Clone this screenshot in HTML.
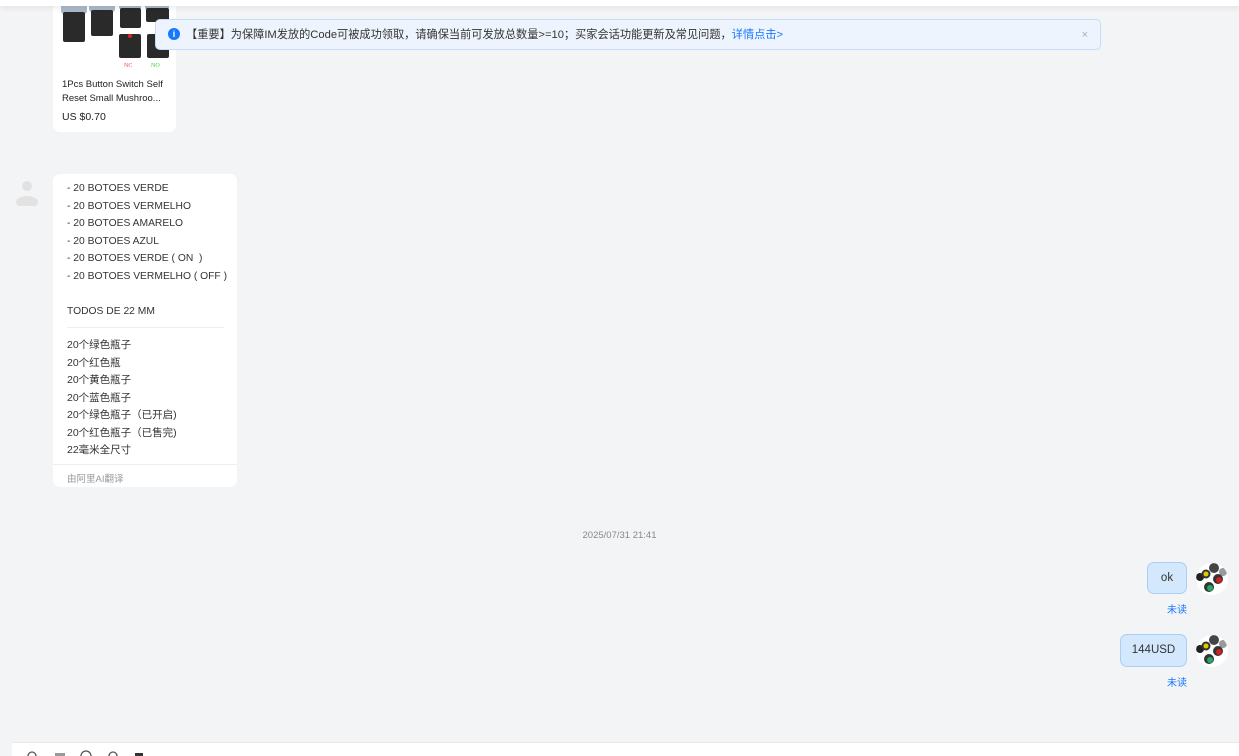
<!DOCTYPE html>
<html><head><meta charset="utf-8"><style>
*{margin:0;padding:0;box-sizing:border-box}
body{width:1239px;height:756px;background:#f3f4f6;position:relative;overflow:hidden;font-family:"Liberation Sans","Noto Sans CJK SC",sans-serif;color:#333}
.abs{position:absolute}
.topbar{left:0;top:0;width:1239px;height:6px;background:#fff;box-shadow:0 2px 6px rgba(0,0,0,.08)}
.card{left:53px;top:0;width:123px;height:132px;background:#fff;border-radius:0 0 7px 7px}
.banner{left:155px;top:19px;width:946px;height:31px;background:#eef4fd;border:1px solid #c6dcf7;border-radius:5px;font-size:11.2px;line-height:30px;padding-left:30px;color:#333}
.bubble{left:53px;top:174px;width:184px;height:313px;background:#fff;border-radius:7px;font-size:10.5px}
.ln{position:absolute;left:14px;white-space:nowrap;color:#333}
.lat{font-size:10.3px}
.me{background:#d3e8fd;border:1px solid #a9cff2;border-radius:7px;font-size:11.5px;text-align:center;line-height:31px;color:#333}
.unread{font-size:10px;color:#1677ff}
.av{width:32px;height:32px;border-radius:50%;background:#fff;overflow:hidden}
</style></head><body>
<div class="abs card">
 <svg width="123" height="75" class="abs" style="left:0;top:0">
  <rect x="8" y="0" width="26" height="14" rx="3" fill="#a9b8c8"/><rect x="10" y="12" width="22" height="30" rx="2" fill="#2a2a2a"/>
  <rect x="36" y="0" width="26" height="12" rx="3" fill="#a9b8c8"/><rect x="38" y="10" width="22" height="26" rx="2" fill="#2a2a2a"/>
  <rect x="66" y="0" width="22" height="10" rx="3" fill="#a9b8c8"/><rect x="67" y="8" width="21" height="20" rx="2" fill="#2a2a2a"/>
  <rect x="92" y="0" width="24" height="10" rx="3" fill="#a9b8c8"/><rect x="93" y="8" width="23" height="14" rx="2" fill="#2a2a2a"/>
  <rect x="66" y="34" width="22" height="24" rx="2" fill="#2a2a2a"/><circle cx="77" cy="36" r="2" fill="#d22"/>
  <rect x="94" y="34" width="22" height="24" rx="2" fill="#2a2a2a"/>
  <text x="71" y="67" font-size="6" fill="#e44" font-family="Liberation Serif">NC</text>
  <text x="98" y="67" font-size="6" fill="#3c3" font-family="Liberation Serif">NO</text>
 </svg>
 <div class="abs" style="left:9px;top:78px;font-size:9.5px;line-height:14px;color:#222">1Pcs Button Switch Self<br>Reset Small Mushroo...</div>
 <div class="abs" style="left:9px;top:111px;font-size:10.5px;color:#222">US $0.70</div>
</div>
<div class="abs topbar"></div>
<div class="abs banner"><span class="abs" style="left:12px;top:8px;width:12px;height:12px;border-radius:50%;background:#1677ff;color:#fff;font-size:9px;line-height:12px;text-align:center;font-weight:bold">i</span>【重要】为保障IM发放的Code可被成功领取，请确保当前可发放总数量>=10；买家会话功能更新及常见问题，<span style="color:#1677ff">详情点击></span><span class="abs" style="right:12px;top:0;color:#aaa;font-size:11px">×</span></div>

<svg class="abs" style="left:14px;top:178px" width="26" height="28"><circle cx="13" cy="8" r="5" fill="#e2e2e2"/><ellipse cx="13" cy="24" rx="11" ry="6" fill="#e2e2e2"/></svg>
<div class="abs bubble">
 <div class="ln lat" style="top:9px">- 20 BOTOES VERDE</div>
 <div class="ln lat" style="top:27px">- 20 BOTOES VERMELHO</div>
 <div class="ln lat" style="top:44px">- 20 BOTOES AMARELO</div>
 <div class="ln lat" style="top:62px">- 20 BOTOES AZUL</div>
 <div class="ln lat" style="top:79px">- 20 BOTOES VERDE ( ON &nbsp;)</div>
 <div class="ln lat" style="top:97px">- 20 BOTOES VERMELHO ( OFF )</div>
 <div class="ln lat" style="top:132px">TODOS DE 22 MM</div>
 <div class="abs" style="left:14px;top:153px;width:157px;height:1px;background:#eee"></div>
 <div class="ln" style="top:163px">20个绿色瓶子</div>
 <div class="ln" style="top:181px">20个红色瓶</div>
 <div class="ln" style="top:198px">20个黄色瓶子</div>
 <div class="ln" style="top:216px">20个蓝色瓶子</div>
 <div class="ln" style="top:233px">20个绿色瓶子（已开启)</div>
 <div class="ln" style="top:251px">20个红色瓶子（已售完)</div>
 <div class="ln" style="top:268px">22毫米全尺寸</div>
 <div class="abs" style="left:0;top:290px;width:184px;height:1px;background:#eee"></div>
 <div class="ln" style="top:297px;font-size:9.5px;color:#999">由阿里AI翻译</div>
</div>

<div class="abs" style="left:0;width:1239px;top:530px;text-align:center;font-size:9.5px;color:#888">2025/07/31 21:41</div>

<div class="abs me" style="left:1147px;top:562px;width:40px;height:32px">ok</div>
<div class="abs unread" style="left:1167px;top:601px">未读</div>
<div class="abs me" style="left:1120px;top:634px;width:67px;height:33px">144USD</div>
<div class="abs unread" style="left:1167px;top:674px">未读</div>
<svg class="abs av" style="left:1196px;top:563px" width="32" height="32"><circle cx="4" cy="14" r="4" fill="#222"/><circle cx="18" cy="5" r="5" fill="#444"/><circle cx="27" cy="9" r="4" fill="#999"/><circle cx="10" cy="11" r="4.5" fill="#333"/><circle cx="10" cy="11" r="2.5" fill="#dc0"/><circle cx="22" cy="16" r="5" fill="#333"/><circle cx="23" cy="17" r="3" fill="#c22"/><circle cx="13" cy="24" r="5" fill="#333"/><circle cx="14" cy="25" r="3" fill="#2a6"/></svg>
<svg class="abs av" style="left:1196px;top:635px" width="32" height="32"><circle cx="4" cy="14" r="4" fill="#222"/><circle cx="18" cy="5" r="5" fill="#444"/><circle cx="27" cy="9" r="4" fill="#999"/><circle cx="10" cy="11" r="4.5" fill="#333"/><circle cx="10" cy="11" r="2.5" fill="#dc0"/><circle cx="22" cy="16" r="5" fill="#333"/><circle cx="23" cy="17" r="3" fill="#c22"/><circle cx="13" cy="24" r="5" fill="#333"/><circle cx="14" cy="25" r="3" fill="#2a6"/></svg>

<div class="abs" style="left:12px;top:742px;width:1227px;height:14px;background:#fff;border-top:1px solid #e8e8e8"></div>
<svg class="abs" style="left:25px;top:750px" width="130" height="6"><circle cx="7" cy="6" r="4" fill="none" stroke="#555" stroke-width="1.3"/><rect x="30" y="3" width="10" height="3" fill="#999"/><circle cx="61" cy="6" r="5" fill="none" stroke="#555" stroke-width="1.3"/><circle cx="88" cy="6" r="4" fill="none" stroke="#555" stroke-width="1.3"/><rect x="110" y="3" width="8" height="3" fill="#333"/></svg>
</body></html>
